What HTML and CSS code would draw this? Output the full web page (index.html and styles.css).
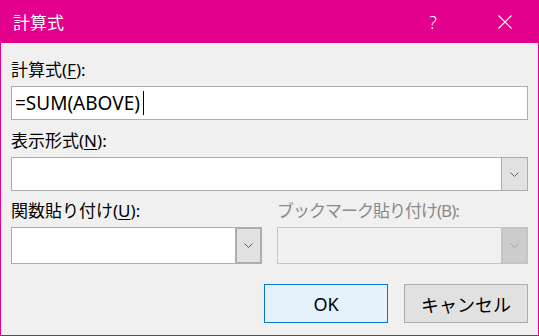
FILE: index.html
```html
<!DOCTYPE html>
<html lang="ja">
<head>
  <meta charset="UTF-8">
  <title>計算式</title>
  <link rel="stylesheet" href="styles.css">
</head>
<body>
  <div class="dialog">
    <div class="dialog-title">
      <span class="dialog-title-text">計算式</span>
      <span class="dialog-title-help">?</span>
      <span class="dialog-title-close">
        <svg width="14" height="14" viewBox="0 0 14 14">
          <path d="M0.5 0.5 L13.5 13.5 M13.5 0.5 L0.5 13.5" stroke="#fff" stroke-width="1.2" fill="none"/>
        </svg>
      </span>
    </div>
    <div class="dialog-body">
      <div class="field">
        <label class="field-label">計算式(<u>F</u>):</label>
        <div class="text-input">=SUM(ABOVE)<span class="caret"></span></div>
      </div>
      <div class="field">
        <label class="field-label">表示形式(<u>N</u>):</label>
        <div class="combo">
          <div class="combo-value"></div>
          <div class="combo-btn">
            <svg width="9" height="5" viewBox="0 0 9 5"><path d="M0.5 0.5 L4.5 4.5 L8.5 0.5" stroke="#606060" fill="none"/></svg>
          </div>
        </div>
      </div>
      <div class="field-row">
        <div class="field">
          <label class="field-label">関数貼り付け(<u>U</u>):</label>
          <div class="combo combo-tall">
            <div class="combo-value"></div>
            <div class="combo-btn">
              <svg width="9" height="5" viewBox="0 0 9 5"><path d="M0.5 0.5 L4.5 4.5 L8.5 0.5" stroke="#606060" fill="none"/></svg>
            </div>
          </div>
        </div>
        <div class="field field-disabled">
          <label class="field-label">ブックマーク貼り付け(B):</label>
          <div class="combo combo-tall">
            <div class="combo-value"></div>
            <div class="combo-btn">
              <svg width="9" height="5" viewBox="0 0 9 5"><path d="M0.5 0.5 L4.5 4.5 L8.5 0.5" stroke="#a6a6a6" fill="none"/></svg>
            </div>
          </div>
        </div>
      </div>
      <div class="buttons">
        <button class="btn btn-default">OK</button>
        <button class="btn">キャンセル</button>
      </div>
    </div>
  </div>
</body>
</html>
```

FILE: styles.css
```css
* {
  margin: 0;
  padding: 0;
  box-sizing: border-box;
}

body {
  font-family: "Noto Sans", "Noto Sans CJK JP", sans-serif;
  font-size: 17px;
  color: #000;
  background: #f0f0f0;
}

.dialog {
  width: 539px;
  height: 336px;
  border: 1px solid #e3008c;
  border-top: none;
  background: #f0f0f0;
}

.dialog-title {
  height: 43px;
  margin: 0 -1px;
  background: #e3008c;
  color: #fff;
  display: flex;
  align-items: center;
  padding-left: 13px;
}

.dialog-title-text {
  flex: 1;
  font-family: "Noto Sans CJK JP", sans-serif;
  font-size: 17px;
}

.dialog-title-help {
  font-size: 18px;
  font-weight: 300;
  margin-right: 61px;
}

.dialog-title-close {
  display: flex;
  margin-right: 27px;
}

.dialog-body {
  padding: 15px 10px 0;
}

.field-label {
  display: block;
  height: 24px;
  line-height: 24px;
  font-family: "Noto Sans", "Noto Sans CJK JP", sans-serif;
  font-size: 17px;
  margin-bottom: 4px;
  white-space: nowrap;
}

.field-label u {
  text-underline-offset: 2px;
}

.text-input {
  height: 34px;
  background: #fff;
  border: 1px solid #adadad;
  display: flex;
  align-items: center;
  padding-left: 3px;
  margin-bottom: 9px;
  font-size: 19px;
}

.caret {
  width: 1px;
  height: 24px;
  background: #000;
  margin-left: 3px;
}

.combo {
  height: 34px;
  display: flex;
  background: #fff;
  border: 1px solid #adadad;
  margin-bottom: 8px;
}

.combo-tall {
  height: 37px;
}

.combo-value {
  flex: 1;
}

.combo-btn {
  width: 27px;
  margin: -1px -1px -1px 0;
  background: #e1e1e1;
  border: 1px solid #adadad;
  display: flex;
  align-items: center;
  justify-content: center;
}

.combo-tall .combo-btn {
  border-width: 2px;
}

.field-row {
  display: grid;
  grid-template-columns: 251px 251px;
  gap: 15px;
}

.field-disabled .field-label {
  color: #8a8a8a;
  letter-spacing: -1px;
}

.field-disabled .combo {
  background: #f0f0f0;
  border-color: #c4c4c4;
}

.field-disabled .combo-btn {
  background: #cccccc;
  border-color: #c4c4c4;
}

.buttons {
  display: flex;
  justify-content: flex-end;
  gap: 16px;
  margin-top: 12px;
}

.btn {
  width: 124px;
  height: 39px;
  font-family: "Noto Sans", "Noto Sans CJK JP", sans-serif;
  font-size: 18px;
  background: #e1e1e1;
  border: 1px solid #adadad;
  color: #000;
}

.btn-default {
  background: #e5f1fb;
  border-color: #0078d7;
}
```
